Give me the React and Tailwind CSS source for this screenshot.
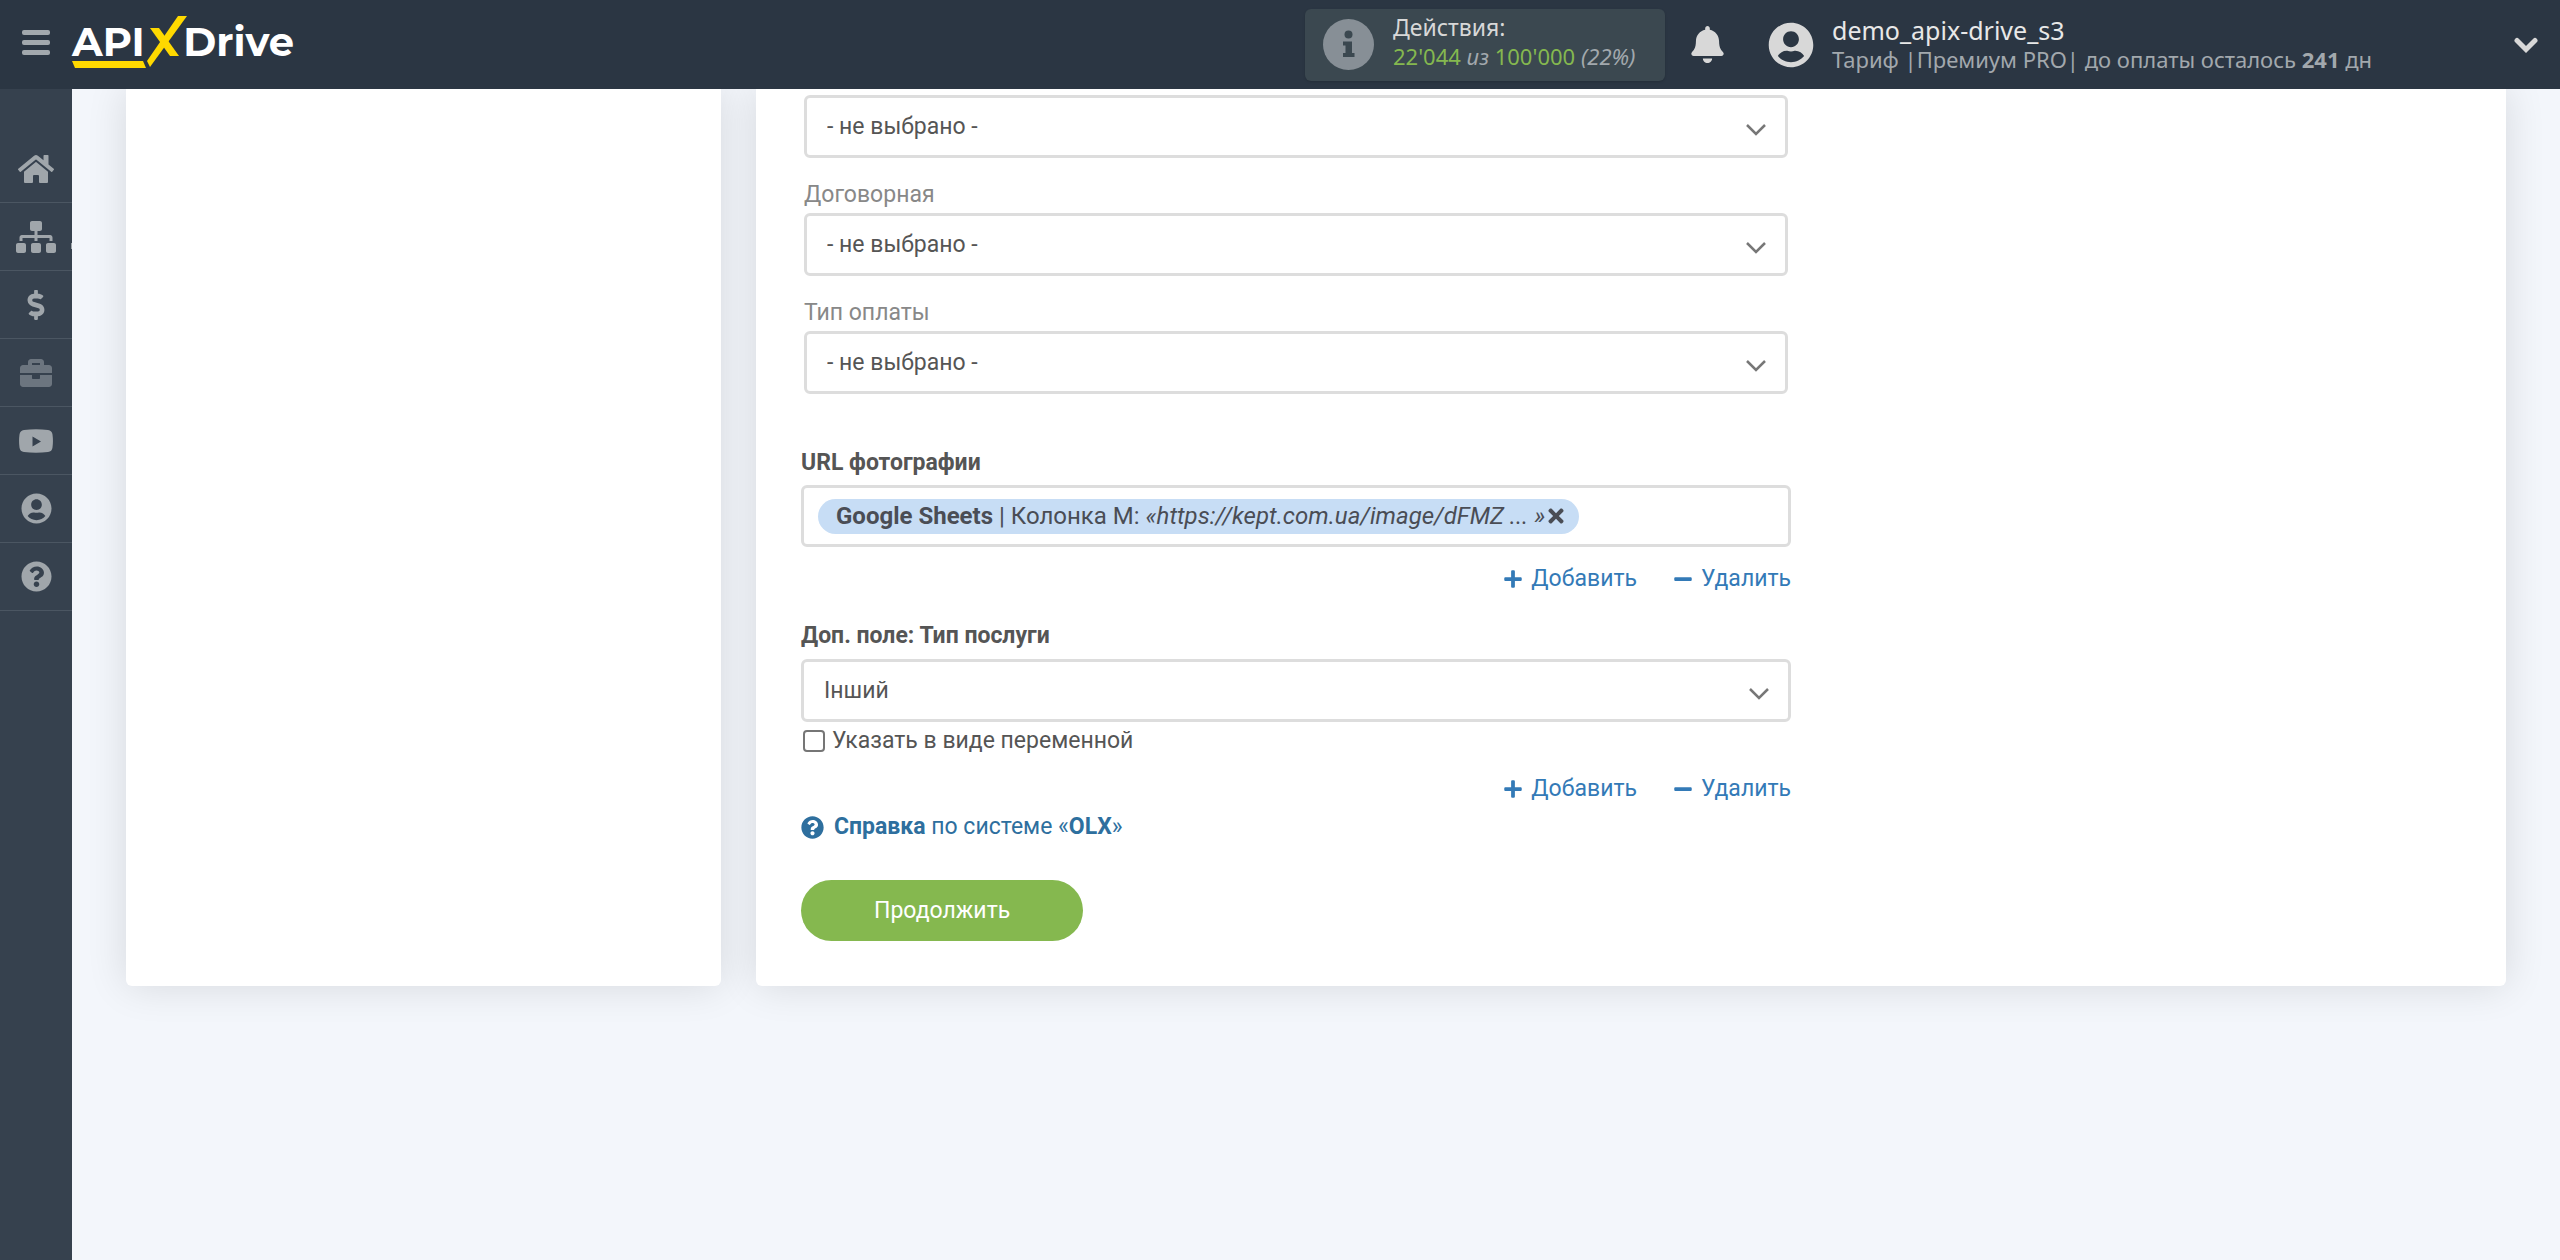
import { useState } from 'react'
import {
  FaBell,
  FaBriefcase,
  FaDollarSign,
  FaHome,
  FaMinus,
  FaPlus,
  FaQuestionCircle,
  FaSitemap,
  FaTimes,
  FaUserCircle,
} from 'react-icons/fa'

const NOT_SELECTED = '- не выбрано -'

// YouTube badge, squarer than the brand one
function VideoIcon({ className }) {
  return (
    <svg viewBox="0 0 34 24" fill="currentColor" className={className}>
      <path
        fillRule="evenodd"
        d="M5 1Q17-.6 29 1 33 1.500 33.500 5.500 34.400 12 33.500 18.500 33 22.500 29 23 17 24.600 5 23 1 22.500.500 18.500-.4 12 .5 5.500 1 1.500 5 1ZM13.500 7.500v10l8.500-5Z"
      />
    </svg>
  )
}

const NAV = [
  { label: 'Главная', Icon: FaHome, size: 'w-9 h-8' },
  { label: 'Связи', Icon: FaSitemap, size: 'w-10 h-8', more: true },
  { label: 'Оплата', Icon: FaDollarSign, size: 'w-8 h-[30px]' },
  { label: 'Инструменты', Icon: FaBriefcase, size: 'w-8 h-8', dim: true },
  { label: 'Видео', Icon: VideoIcon, size: 'w-[34px] h-6' },
  { label: 'Профиль', Icon: FaUserCircle, size: 'w-[31px] h-[31px]' },
  { label: 'Помощь', Icon: FaQuestionCircle, size: 'w-[31px] h-[31px]' },
]

function Logo() {
  return (
    <a href="#" className="relative ml-[22px] flex h-[89px] w-[222px] items-center font-['Montserrat','Inter',sans-serif] text-[40px] leading-10 font-bold text-white">
      <span className="flex w-full justify-between pb-1.5">
        <span>API</span>
        <span>Drive</span>
      </span>
      {/* yellow tick and underline */}
      <svg viewBox="0 0 222 89" className="absolute inset-0 h-full w-full" fill="#ffd900">
        <path d="M0 61h71l3 7H3Z" />
        <path d="M106 16h9L78 67l-3-6Z" />
        <path d="M78 28h9l20 28h-9Z" />
      </svg>
    </a>
  )
}

function Header() {
  return (
    <header className="flex h-[89px] items-center bg-[#2b3643] font-['Noto_Sans','Open_Sans',sans-serif]">
      <button type="button" aria-label="Меню" className="ml-[22px] flex w-7 flex-col gap-[5px] pb-1">
        <span className="h-[5px] w-full rounded-xs bg-[#a2a8ad]" />
        <span className="h-[5px] w-full rounded-xs bg-[#a2a8ad]" />
        <span className="h-[5px] w-full rounded-xs bg-[#a2a8ad]" />
      </button>
      <Logo />

      <div className="ml-auto flex items-center">
        <div className="flex h-[72px] w-[360px] items-center gap-[19px] rounded-md bg-[#3b4850] pl-[18px] shadow-sm">
          <svg viewBox="0 0 51 51" className="h-[51px] w-[51px] shrink-0">
            <circle cx="25.500" cy="25.500" r="25.500" fill="#878f96" />
            <circle cx="25.500" cy="15.500" r="4" fill="#3b4850" />
            <path d="M20 22.500h9v11.500h2.500v4h-11.500v-4h2.500v-7.500h-2.500Z" fill="#3b4850" />
          </svg>
          <div className="pb-1.5">
            <div className="text-[23px] leading-[29px] text-[#d8d8d8]">Действия:</div>
            <div className="text-[22px] leading-[29px] text-[#a2a8ad]">
              <span className="text-[#85b84f]">22'044</span> <i>из</i>{' '}
              <span className="text-[#85b84f]">100'000</span> <i>(22%)</i>
            </div>
          </div>
        </div>
        <button type="button" aria-label="Уведомления" className="ml-6">
          <FaBell className="h-[37px] w-[37px] text-[#d8d8d8]" />
        </button>
      </div>

      <FaUserCircle className="ml-[42px] h-[46px] w-[46px] shrink-0 text-[#d8d8d8]" />
      <div className="ml-[18px] w-[682px]">
        <div className="text-[25px] leading-[29px] text-[#e8e8e8]">demo_apix-drive_s3</div>
        <div className="text-[22px] leading-[29px] text-[#a2a8ad]">
          Тариф |Премиум PRO| до оплаты осталось <b>241</b> дн
        </div>
      </div>
      <button type="button" aria-label="Меню аккаунта" className="mr-[22px]">
        <svg viewBox="0 0 24 16" className="h-4 w-6" fill="none" stroke="#d8d8d8" strokeWidth="5" strokeLinecap="round">
          <path d="m3 3.500 9 9 9-9" />
        </svg>
      </button>
    </header>
  )
}

function Sidebar() {
  return (
    <nav className="w-[72px] shrink-0 bg-[#36414e] pt-[46px]">
      {NAV.map(({ label, Icon, size, dim, more }) => (
        <a
          key={label}
          href="#"
          aria-label={label}
          className="relative flex h-[68px] items-center justify-center border-b border-[#4b5662]"
        >
          <Icon className={`${size} ${dim ? 'text-[#6c757f]' : 'text-[#a0a6ab]'}`} />
          {more && <span className="absolute right-0 bottom-[21px] h-1.5 w-px bg-[#a0a6ab]" />}
        </a>
      ))}
    </nav>
  )
}

function SelectBox({ id, label, options }) {
  return (
    <div className="relative">
      <select
        id={id}
        aria-label={label}
        className="block h-[63px] w-full appearance-none rounded-md border-3 border-[#ddd] bg-white px-5 text-[#555]"
      >
        {options.map(o => (
          <option key={o}>{o}</option>
        ))}
      </select>
      <svg
        viewBox="0 0 20 12"
        className="pointer-events-none absolute top-[29px] right-[22px] h-3 w-5"
        fill="none"
        stroke="#777"
        strokeWidth="2.500"
      >
        <path d="m1 1 9 9 9-9" />
      </svg>
    </div>
  )
}

function RowActions() {
  return (
    <div className="mt-4 flex justify-end gap-9 text-[#337ab7]">
      <a href="#" className="flex items-center gap-2">
        <FaPlus className="h-5 w-5" />
        Добавить
      </a>
      <a href="#" className="flex items-center gap-2">
        <FaMinus className="h-5 w-5" />
        Удалить
      </a>
    </div>
  )
}

function SettingsForm() {
  const [asVariable, setAsVariable] = useState(false)
  const [hasChip, setHasChip] = useState(true)

  return (
    <form onSubmit={e => e.preventDefault()} className="w-full max-w-[990px]">
      <div className="px-[3px]">
        <SelectBox id="currency" label="Валюта" options={[NOT_SELECTED]} />
        <label htmlFor="negotiable" className="mt-[21px] mb-0.5 block text-[#888]">Договорная</label>
        <SelectBox id="negotiable" options={[NOT_SELECTED]} />
        <label htmlFor="payment" className="mt-[21px] mb-0.5 block text-[#888]">Тип оплаты</label>
        <SelectBox id="payment" options={[NOT_SELECTED]} />
      </div>

      <div className="mt-[53px] mb-1.5 font-bold">URL фотографии</div>
      <div className="flex h-[62px] items-center rounded-md border-3 border-[#ddd] pr-4 pl-[14px]">
        {hasChip && (
          <span className="flex h-[35px] items-center rounded-full bg-[#c7ddf5] pr-3 pl-[18px] text-[24px] whitespace-pre text-[#4a4d55]">
            <b>Google Sheets</b> | Колонка M: <i>«https://kept.com.ua/image/dFMZ ... »</i>
            <button type="button" aria-label="Убрать" onClick={() => setHasChip(false)}>
              <FaTimes className="h-[22px] w-[22px]" />
            </button>
          </span>
        )}
      </div>
      <RowActions />

      <label htmlFor="service" className="mt-[25px] mb-[7px] block font-bold">Доп. поле: Тип послуги</label>
      <SelectBox id="service" options={['Інший']} />
      <label className="mt-[3px] flex items-center gap-[7px] pl-0.5">
        <input
          type="checkbox"
          checked={asVariable}
          onChange={e => setAsVariable(e.target.checked)}
          className="h-[22px] w-[22px] appearance-none rounded-sm border-2 border-[#767676] bg-white checked:bg-[#337ab7]"
        />
        Указать в виде переменной
      </label>
      <RowActions />

      <a href="#" className="mt-1.5 flex items-center gap-2.5 text-[#2e6f9e]">
        <FaQuestionCircle className="h-[23px] w-[23px]" />
        <span><b>Справка</b> по системе «<b>OLX</b>»</span>
      </a>
      <button type="submit" className="mt-[37px] block h-[61px] rounded-full bg-[#85b84f] px-[73px] text-white">
        Продолжить
      </button>
    </form>
  )
}

export default function App() {
  return (
    <div className="flex min-h-screen flex-col bg-[#f3f6fb] font-['Roboto',sans-serif] text-[23px] leading-8 text-[#555]">
      <Header />
      <div className="flex flex-1">
        <Sidebar />
        {/* clip the card shadows under the header */}
        <main className="flex flex-1 items-start overflow-hidden px-[54px]">
          <div className="flex flex-1 gap-[35px]">
            <section className="w-1/4 shrink-0 rounded-b-md bg-white shadow-[0_0_40px_rgba(0,0,0,0.12)]" />
            <section className="flex-1 rounded-b-md bg-white px-[45px] pt-1.5 pb-[45px] shadow-[0_0_40px_rgba(0,0,0,0.12)]">
              <SettingsForm />
            </section>
          </div>
        </main>
      </div>
    </div>
  )
}
